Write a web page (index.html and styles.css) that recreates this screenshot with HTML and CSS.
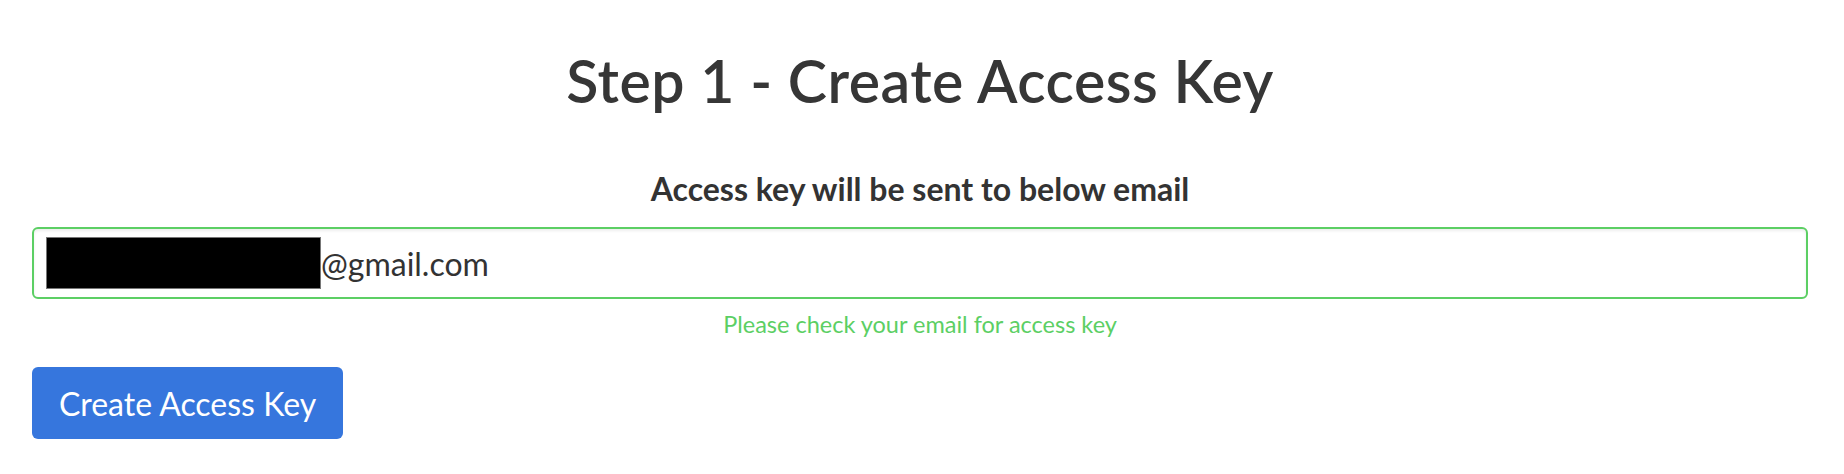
FILE: index.html
```html
<!DOCTYPE html>
<html>
<head>
<meta charset="utf-8">
<link rel="stylesheet" href="styles.css">
</head>
<body>
<div class="page">
  <h1 class="title">Step 1 - Create Access Key</h1>
  <form class="form">
    <label class="label">Access key will be sent to below email</label>
    <div class="field">
      <span class="redact"></span><span class="email">@gmail.com</span>
    </div>
    <div class="help">Please check your email for access key</div>
    <div class="actions">
      <button type="button" class="btn">Create Access Key</button>
    </div>
  </form>
</div>
</body>
</html>
```

FILE: styles.css
```css
* { box-sizing: border-box; }
html, body { margin: 0; padding: 0; background: #fff; }
body {
  font-family: Lato, "Open Sans", sans-serif;
  color: #333;
}
.page {
  padding: 0 36px 0 32px;
}
.title {
  margin: 0;
  padding-top: 46px;
  text-align: center;
  font-family: Lato, sans-serif;
  font-weight: 600;
  font-size: 59px;
  line-height: 70px;
  color: #363636;
  letter-spacing: 0.5px;
}
.form {
  display: flex;
  flex-direction: column;
  margin-top: 53px;
}
.label {
  text-align: center;
  font-weight: 700;
  font-size: 32px;
  line-height: 40px;
  color: #333;
}
.field {
  margin-top: 18px;
  height: 72px;
  border: 2px solid #5ccf64;
  border-radius: 6px;
  box-shadow: inset 0 2px 3px rgba(0,0,0,0.07);
  display: flex;
  align-items: center;
  padding: 0 12px;
}
.redact {
  display: inline-block;
  width: 275px;
  height: 52px;
  background: #000;
  border: 1px solid #777;
}
.email {
  font-size: 32px;
  color: #333;
}
.help {
  text-align: center;
  color: #5ccf64;
  font-size: 23.5px;
  line-height: 30px;
  margin-top: 10px;
}
.actions {
  margin-top: 28px;
}
.btn {
  font-family: Lato, sans-serif;
  background: #3676dd;
  color: #fff;
  border: 0;
  border-radius: 6px;
  width: 311px;
  height: 72px;
  font-size: 32px;
  padding: 0;
}
```
